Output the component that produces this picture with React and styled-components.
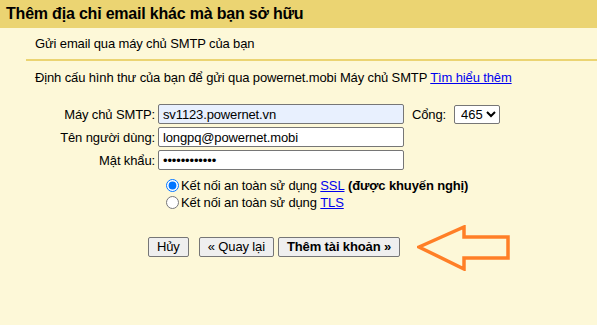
import React from "react";
import styled, { createGlobalStyle } from "styled-components";

const GlobalStyle = createGlobalStyle`
  html, body {
    margin: 0;
    padding: 0;
    background: #fdf8d8;
  }
  body {
    font-family: "Liberation Sans", Arial, sans-serif;
    font-size: 13px;
    letter-spacing: -0.13px;
    color: #000;
  }
`;

const Page = styled.div`
  width: 597px;
  height: 325px;
  background: #fdf8d8;
  overflow: hidden;
`;

const Header = styled.div`
  height: 28px;
  display: flex;
  align-items: center;
  padding-left: 6px;
  background: #ebd472;
  font-size: 16px;
  font-weight: 700;
  letter-spacing: -0.2px;
`;

const Section = styled.div`
  margin-left: 26px;
`;

const SubHeader = styled.div`
  height: 31px;
  display: flex;
  align-items: center;
  padding-left: 9px;
  border-bottom: 2px solid #ebd472;
`;

const Intro = styled.p`
  margin: 9px 0 0 9px;
  line-height: 16px;
`;

const Link = styled.a`
  color: #0000ee;
  text-decoration: underline;
  cursor: pointer;
`;

const Form = styled.div`
  display: grid;
  grid-template-columns: 132px auto;
  row-gap: 3px;
  margin-top: 18px;
  align-items: center;
`;

const Label = styled.label`
  text-align: right;
  padding-right: 3px;
`;

const Field = styled.div`
  display: flex;
  align-items: center;
  gap: 8px;
`;

const Input = styled.input`
  box-sizing: border-box;
  width: 246px;
  height: 20px;
  margin: 0;
  padding: 0 4px;
  border: 1px solid #767676;
  border-radius: 2px;
  background: ${p => (p.$filled ? "#e8f0fe" : "#fff")};
  font-family: "Liberation Sans", Arial, sans-serif;
  font-size: 13px;
  letter-spacing: -0.13px;
  color: #000;
  outline: none;
`;

const Select = styled.select`
  box-sizing: border-box;
  height: 19px;
  width: 46px;
  margin: 0;
  padding: 0 0 0 2px;
  border: 1px solid #767676;
  border-radius: 2px;
  background: #fff;
  font-family: "Liberation Sans", Arial, sans-serif;
  font-size: 13px;
`;

const Options = styled.div`
  grid-column: 2;
  display: flex;
  flex-direction: column;
  gap: 2px;
  margin-top: 5px;
  margin-left: 6px;
`;

const Option = styled.label`
  display: flex;
  align-items: center;
  height: 15px;
`;

const Radio = styled.input`
  margin: 0 2px 0 2px;
  width: 13px;
  height: 13px;
`;

const Buttons = styled.div`
  display: flex;
  align-items: center;
  margin: 12px 0 0 122px;
`;

const Button = styled.button`
  box-sizing: border-box;
  height: 20px;
  margin-right: ${p => p.$gap || 4}px;
  padding: 0 8px;
  border: 1px solid #767676;
  border-radius: 2px;
  background: #efefef;
  font-family: "Liberation Sans", Arial, sans-serif;
  font-size: 13px;
  letter-spacing: -0.13px;
  font-weight: ${p => (p.$primary ? 700 : 400)};
  color: #000;
`;

const Arrow = styled.svg`
  display: block;
  margin-left: 13px;
  margin-top: 3px;
`;

export default function App() {
  return (
    <Page>
      <GlobalStyle />
      <Header>Thêm địa chỉ email khác mà bạn sở hữu</Header>
      <Section>
        <SubHeader>Gửi email qua máy chủ SMTP của bạn</SubHeader>
        <Intro>
          Định cấu hình thư của bạn để gửi qua powernet.mobi Máy chủ SMTP{" "}
          <Link>Tìm hiểu thêm</Link>
        </Intro>
        <Form>
          <Label>Máy chủ SMTP:</Label>
          <Field>
            <Input $filled defaultValue="sv1123.powernet.vn" />
            <span>Cổng:</span>
            <Select defaultValue="465">
              <option>465</option>
              <option>587</option>
            </Select>
          </Field>
          <Label>Tên người dùng:</Label>
          <Field>
            <Input defaultValue="longpq@powernet.mobi" />
          </Field>
          <Label>Mật khẩu:</Label>
          <Field>
            <Input type="password" defaultValue="abcdefghijkl" />
          </Field>
          <Options>
            <Option>
              <Radio type="radio" name="sec" defaultChecked />
              Kết nối an toàn sử dụng&nbsp;<Link>SSL</Link>&nbsp;<b>(được khuyến nghị)</b>
            </Option>
            <Option>
              <Radio type="radio" name="sec" />
              Kết nối an toàn sử dụng&nbsp;<Link>TLS</Link>
            </Option>
          </Options>
        </Form>
        <Buttons>
          <Button $gap={10}>Hủy</Button>
          <Button>« Quay lại</Button>
          <Button $primary $gap={0}>Thêm tài khoản »</Button>
          <Arrow width="94" height="46" viewBox="0 0 94 46">
            <path
              d="M2 22 L47 2 L47 12 L91 12 L91 33 L47 33 L47 44 Z"
              fill="none"
              stroke="#ff7f27"
              strokeWidth="3.5"
              strokeLinejoin="miter"
            />
          </Arrow>
        </Buttons>
      </Section>
    </Page>
  );
}
